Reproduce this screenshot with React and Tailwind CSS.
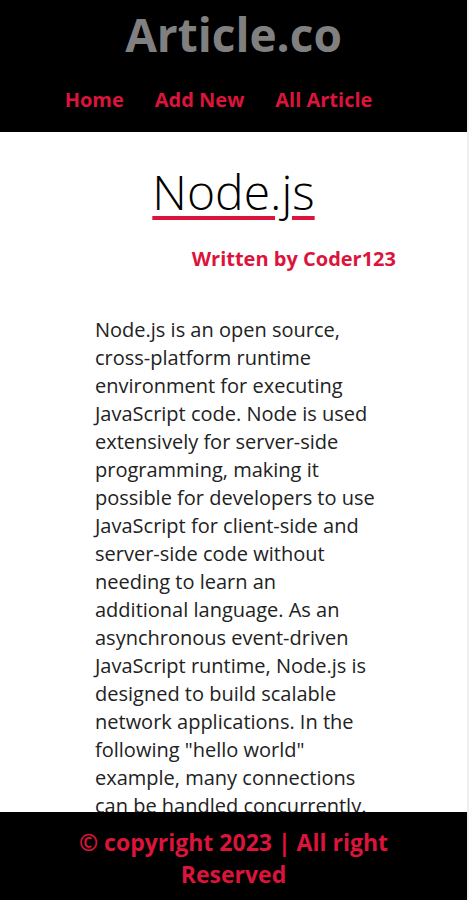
import React from 'react';

const font = { fontFamily: '"Open Sans", "Noto Sans", sans-serif' };

const Header = () => (
  <header className="bg-black pt-[6px] pb-[18px]">
    <h1 className="text-center text-[46px] font-bold leading-[56px] text-[#808080]">Article.co</h1>
    <nav className="mt-[24px] flex justify-center gap-[31px] pr-[30px] text-[20px] font-bold leading-[28px] text-[#dc143c]">
      <a href="#">Home</a>
      <a href="#">Add New</a>
      <a href="#">All Article</a>
    </nav>
  </header>
);

const Article = () => (
  <main className="pb-[100px]">
    <h2 className="mt-[30px] text-center text-[48px] font-light leading-[60px] text-black underline decoration-[#dc143c] decoration-4 underline-offset-[6px]">
      Node.js
    </h2>
    <p className="mt-[22px] pr-[71px] text-right text-[20px] font-bold text-[#dc143c]">Written by Coder123</p>
    <p className="mt-[42px] ml-[95px] w-[281px] text-[20px] leading-[28px] text-[#222]">
      Node.js is an open source, cross-platform runtime environment for executing JavaScript code. Node is
      used extensively for server-side programming, making it possible for developers to use JavaScript for
      client-side and server-side code without needing to learn an additional&nbsp;language. As an asynchronous
      event-driven JavaScript runtime, Node.js is designed to build scalable network applications. In the
      following "hello world" example, many connections can be handled concurrently. Upon each connection,
      the callback is fired, but if there is no work to be done, Node.js will sleep.
    </p>
  </main>
);

const Footer = () => (
  <footer className="fixed bottom-0 left-0 w-[467px] bg-black pt-[14px] pb-[10px] text-center text-[23px] font-bold leading-[32px] text-[#dc143c]">
    <p className="px-[70px]">© copyright 2023 | All right Reserved</p>
  </footer>
);

export default function App() {
  return (
    <div style={font} className="min-h-[900px] w-[469px] bg-[#f0f0f0]">
      <div className="min-h-[900px] w-[467px] bg-white">
        <Header />
        <Article />
        <Footer />
      </div>
    </div>
  );
}
